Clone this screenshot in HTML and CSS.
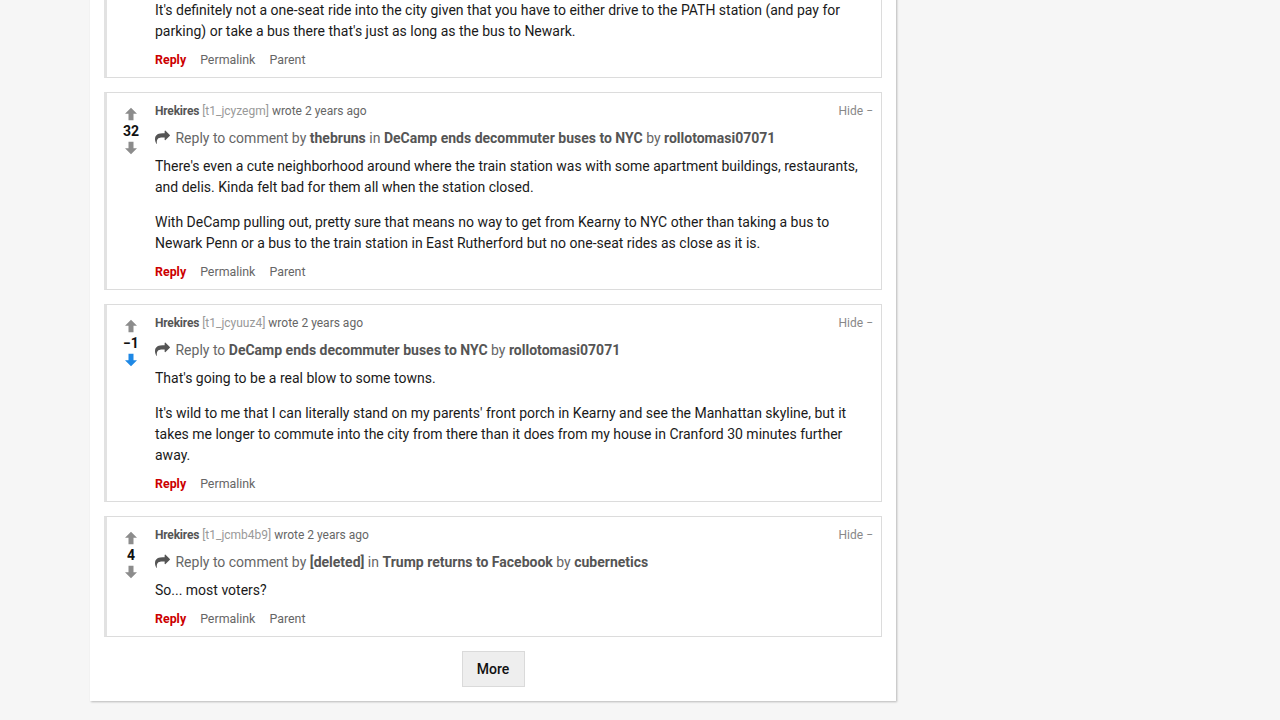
FILE: index.html
```html
<!DOCTYPE html>
<html lang="en">
<head>
<meta charset="utf-8">
<title>Comments</title>
<link rel="stylesheet" href="styles.css">
</head>
<body>
<div class="panel">
  <div class="card first">
    <div class="vote">
      <svg class="arrow" viewBox="0 0 14 14"><path d="M7 0.8 L13 6.8 L9.5 6.8 L9.5 13.2 L4.5 13.2 L4.5 6.8 L1 6.8 Z"/></svg>
      <div class="score">3</div>
      <svg class="arrow" viewBox="0 0 14 14"><path d="M7 13.2 L13 7.2 L9.5 7.2 L9.5 0.8 L4.5 0.8 L4.5 7.2 L1 7.2 Z"/></svg>
    </div>
    <div class="content">
      <div class="meta"><span class="hide">Hide −</span><span class="author">Hrekires</span> <span class="id">[t1_jcyz000]</span> wrote 2 years ago</div>
      <div class="context"><svg class="share" viewBox="0 0 1792 1792"><path d="M1792 640q0 26-19 45l-512 512q-19 19-45 19t-45-19-19-45v-256h-224q-98 0-175.5 6t-154 21.5-133 42.5-105.5 69.5-80 101-48.5 138.5-17.5 181q0 55 5 123 0 6 2.5 23.5t2.5 26.5q0 15-8.5 25t-23.5 10q-16 0-28-17-7-9-13-22t-13.5-30-10.5-24q-127-285-127-451 0-199 53-333 162-403 875-403h224v-256q0-26 19-45t45-19 45 19l512 512q19 19 19 45z"/></svg> Reply to comment by <b>someone</b> in <b>DeCamp ends decommuter buses to NYC</b> by <b>rollotomasi07071</b></div>
      <p>It's definitely not a one-seat ride into the city given that you have to either drive to the PATH station (and pay for parking) or take a bus there that's just as long as the bus to Newark.</p>
      <div class="actions"><a class="reply">Reply</a><a>Permalink</a><a>Parent</a></div>
    </div>
  </div>

  <div class="card">
    <div class="vote">
      <svg class="arrow" viewBox="0 0 14 14"><path d="M7 0.8 L13 6.8 L9.5 6.8 L9.5 13.2 L4.5 13.2 L4.5 6.8 L1 6.8 Z"/></svg>
      <div class="score">32</div>
      <svg class="arrow" viewBox="0 0 14 14"><path d="M7 13.2 L13 7.2 L9.5 7.2 L9.5 0.8 L4.5 0.8 L4.5 7.2 L1 7.2 Z"/></svg>
    </div>
    <div class="content">
      <div class="meta"><span class="hide">Hide −</span><span class="author">Hrekires</span> <span class="id">[t1_jcyzegm]</span> wrote 2 years ago</div>
      <div class="context"><svg class="share" viewBox="0 0 1792 1792"><path d="M1792 640q0 26-19 45l-512 512q-19 19-45 19t-45-19-19-45v-256h-224q-98 0-175.5 6t-154 21.5-133 42.5-105.5 69.5-80 101-48.5 138.5-17.5 181q0 55 5 123 0 6 2.5 23.5t2.5 26.5q0 15-8.5 25t-23.5 10q-16 0-28-17-7-9-13-22t-13.5-30-10.5-24q-127-285-127-451 0-199 53-333 162-403 875-403h224v-256q0-26 19-45t45-19 45 19l512 512q19 19 19 45z"/></svg> Reply to comment by <b>thebruns</b> in <b>DeCamp ends decommuter buses to NYC</b> by <b>rollotomasi07071</b></div>
      <p>There's even a cute neighborhood around where the train station was with some apartment buildings, restaurants, and delis. Kinda felt bad for them all when the station closed.</p>
      <p>With DeCamp pulling out, pretty sure that means no way to get from Kearny to NYC other than taking a bus to Newark Penn or a bus to the train station in East Rutherford but no one-seat rides as close as it is.</p>
      <div class="actions"><a class="reply">Reply</a><a>Permalink</a><a>Parent</a></div>
    </div>
  </div>

  <div class="card">
    <div class="vote">
      <svg class="arrow" viewBox="0 0 14 14"><path d="M7 0.8 L13 6.8 L9.5 6.8 L9.5 13.2 L4.5 13.2 L4.5 6.8 L1 6.8 Z"/></svg>
      <div class="score">−1</div>
      <svg class="arrow voted" viewBox="0 0 14 14"><path d="M7 13.2 L13 7.2 L9.5 7.2 L9.5 0.8 L4.5 0.8 L4.5 7.2 L1 7.2 Z"/></svg>
    </div>
    <div class="content">
      <div class="meta"><span class="hide">Hide −</span><span class="author">Hrekires</span> <span class="id">[t1_jcyuuz4]</span> wrote 2 years ago</div>
      <div class="context"><svg class="share" viewBox="0 0 1792 1792"><path d="M1792 640q0 26-19 45l-512 512q-19 19-45 19t-45-19-19-45v-256h-224q-98 0-175.5 6t-154 21.5-133 42.5-105.5 69.5-80 101-48.5 138.5-17.5 181q0 55 5 123 0 6 2.5 23.5t2.5 26.5q0 15-8.5 25t-23.5 10q-16 0-28-17-7-9-13-22t-13.5-30-10.5-24q-127-285-127-451 0-199 53-333 162-403 875-403h224v-256q0-26 19-45t45-19 45 19l512 512q19 19 19 45z"/></svg> Reply to <b>DeCamp ends decommuter buses to NYC</b> by <b>rollotomasi07071</b></div>
      <p>That's going to be a real blow to some towns.</p>
      <p>It's wild to me that I can literally stand on my parents' front porch in Kearny and see the Manhattan skyline, but it takes me longer to commute into the city from there than it does from my house in Cranford 30 minutes further away.</p>
      <div class="actions"><a class="reply">Reply</a><a>Permalink</a></div>
    </div>
  </div>

  <div class="card">
    <div class="vote">
      <svg class="arrow" viewBox="0 0 14 14"><path d="M7 0.8 L13 6.8 L9.5 6.8 L9.5 13.2 L4.5 13.2 L4.5 6.8 L1 6.8 Z"/></svg>
      <div class="score">4</div>
      <svg class="arrow" viewBox="0 0 14 14"><path d="M7 13.2 L13 7.2 L9.5 7.2 L9.5 0.8 L4.5 0.8 L4.5 7.2 L1 7.2 Z"/></svg>
    </div>
    <div class="content">
      <div class="meta"><span class="hide">Hide −</span><span class="author">Hrekires</span> <span class="id">[t1_jcmb4b9]</span> wrote 2 years ago</div>
      <div class="context"><svg class="share" viewBox="0 0 1792 1792"><path d="M1792 640q0 26-19 45l-512 512q-19 19-45 19t-45-19-19-45v-256h-224q-98 0-175.5 6t-154 21.5-133 42.5-105.5 69.5-80 101-48.5 138.5-17.5 181q0 55 5 123 0 6 2.5 23.5t2.5 26.5q0 15-8.5 25t-23.5 10q-16 0-28-17-7-9-13-22t-13.5-30-10.5-24q-127-285-127-451 0-199 53-333 162-403 875-403h224v-256q0-26 19-45t45-19 45 19l512 512q19 19 19 45z"/></svg> Reply to comment by <b>[deleted]</b> in <b>Trump returns to Facebook</b> by <b>cubernetics</b></div>
      <p>So... most voters?</p>
      <div class="actions"><a class="reply">Reply</a><a>Permalink</a><a>Parent</a></div>
    </div>
  </div>

  <div class="more-row"><button class="more">More</button></div>
</div>
</body>
</html>
```
FILE: styles.css
```css
html, body {
  margin: 0;
  padding: 0;
}
body {
  background: #f6f6f6;
  font-family: Roboto, "Liberation Sans", Arial, sans-serif;
  color: #222;
  height: 720px;
  overflow: hidden;
}
.panel {
  margin-left: 90px;
  margin-top: -64px;
  width: 806px;
  box-sizing: border-box;
  background: #fff;
  padding: 0 14px 14px;
  box-shadow: 1px 1px 2px rgba(0,0,0,0.25);
  display: flex;
  flex-direction: column;
  gap: 14px;
}
.card {
  display: flex;
  background: #fff;
  border: 1px solid #dcdcdc;
  border-left: 3px solid #e2e2e2;
  padding: 9px 8px 7px 0;
}
.vote {
  width: 48px;
  flex: none;
  display: flex;
  flex-direction: column;
  align-items: center;
  padding-top: 5px;
}
.arrow {
  width: 14px;
  height: 14px;
  fill: #8c8c8c;
}
.arrow.voted {
  fill: #1e88e5;
}
.score {
  font-size: 14px;
  font-weight: 700;
  color: #111;
  line-height: 18px;
  margin: 1px 0;
}
.content {
  flex: 1;
  min-width: 0;
}
.meta {
  font-size: 12px;
  line-height: 18px;
  color: #666;
}
.author {
  font-weight: 700;
  color: #555;
  letter-spacing: -0.2px;
}
.id {
  color: #999;
}
.hide {
  float: right;
  color: #888;
}
.context {
  margin-top: 8px;
  font-size: 14px;
  line-height: 21px;
  color: #666;
}
.context b {
  color: #555;
  font-weight: 700;
}
.share {
  width: 15px;
  height: 15px;
  fill: #555;
  vertical-align: -2px;
  margin-right: 2px;
}
.content p {
  margin: 7px 0 0;
  font-size: 14px;
  line-height: 21px;
  color: #1a1a1a;
}
.content p + p {
  margin-top: 14px;
}
.actions {
  margin-top: 7px;
  display: flex;
  gap: 14px;
  font-size: 12.4px;
  line-height: 21px;
  color: #666;
}
.actions .reply {
  color: #cc0000;
  font-weight: 700;
}
.more-row {
  display: flex;
  justify-content: center;
}
.more {
  font-family: Roboto, "Liberation Sans", Arial, sans-serif;
  font-size: 14px;
  font-weight: 500;
  color: #111;
  background: #eeeeee;
  border: 1px solid #dadada;
  width: 63px;
  height: 36px;
  padding: 0;
}
```
